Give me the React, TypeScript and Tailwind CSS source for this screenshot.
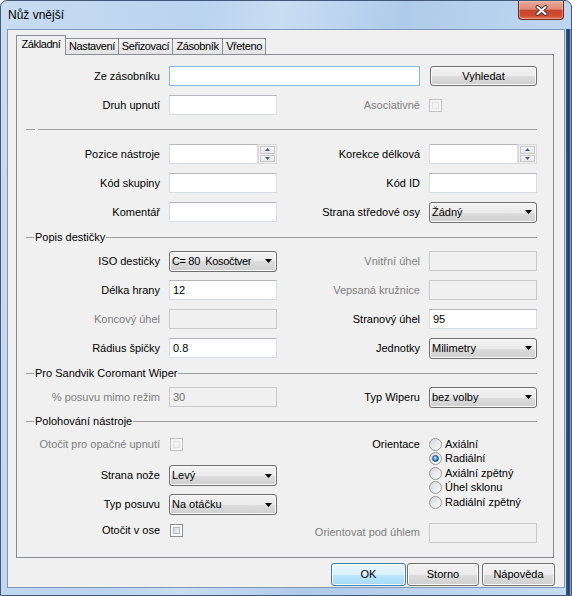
import clsx from 'clsx'

const GRAY = 'text-[#7f7f7f]'
const BTN_BG = 'bg-[linear-gradient(#f2f2f2_0%,#ebebeb_50%,#dddddd_50%,#cfcfcf_100%)]'

function Label({ children, right, disabled }: { children?: React.ReactNode; right?: boolean; disabled?: boolean }) {
    return (
        <span className={clsx('shrink-0 pr-[9px] text-right whitespace-nowrap', right ? 'w-[152px]' : 'w-[143px]', disabled && GRAY)}>
            {children}
        </span>
    )
}

function TextBox({ value, disabled, focused, wide }: { value?: string; disabled?: boolean; focused?: boolean; wide?: boolean }) {
    return (
        <div
            className={clsx(
                'h-[20px] shrink-0 border flex items-center pl-[3px]',
                wide ? 'w-[251px]' : 'w-[108px]',
                disabled
                    ? 'bg-[#f0f0f0] border-[#cacaca] text-[#6d6d6d]'
                    : focused
                        ? 'bg-white border-[#84b5e3]'
                        : 'bg-white border-[#d8dde4] border-t-[#b4b7be]',
            )}
        >
            {value}
        </div>
    )
}

function Spin() {
    return (
        <div className="flex h-[20px] w-[108px] shrink-0">
            <div className="w-[89px] h-full bg-white border border-[#d8dde4] border-t-[#b4b7be]" />
            <div className="w-[19px] h-full flex flex-col border border-[#dadada] bg-[#f0f0f0] p-px gap-px">
                <div className="flex-1 flex items-center justify-center border border-[#c9c9c9] bg-[linear-gradient(#f7f7f7,#e6e6e6)]">
                    <svg width="5" height="3" viewBox="0 0 5 3"><path d="M0 3H5L2.5 0Z" fill="#4a5f80" /></svg>
                </div>
                <div className="flex-1 flex items-center justify-center border border-[#c9c9c9] bg-[linear-gradient(#f7f7f7,#e6e6e6)]">
                    <svg width="5" height="3" viewBox="0 0 5 3"><path d="M0 0H5L2.5 3Z" fill="#4a5f80" /></svg>
                </div>
            </div>
        </div>
    )
}

function Combo({ value, tight }: { value: string; tight?: boolean }) {
    return (
        <div className={`w-[108px] h-[21px] shrink-0 flex items-center rounded-[3px] border border-[#707070] ${BTN_BG} shadow-[inset_0_0_0_1px_#f9f9f9] pl-[2px] pr-[4px]`}>
            <span className={clsx('flex-1 overflow-hidden whitespace-pre', tight && 'tracking-[-0.35px]')}>{value}</span>
            <svg width="7" height="4" viewBox="0 0 7 4" className="shrink-0 ml-[4px]"><path d="M0 0H7L3.5 4Z" fill="#000" /></svg>
        </div>
    )
}

function Check({ disabled }: { disabled?: boolean }) {
    return (
        <div className={clsx('w-[13px] h-[13px] shrink-0 border p-[2px]', disabled ? 'border-[#c2c2c2] bg-[#f4f4f4]' : 'border-[#8e8f8f] bg-white')}>
            <div className={clsx('w-full h-full border', disabled ? 'border-[#e2e2e2] bg-[#f2f2f2]' : 'border-[#b3b8be] bg-[linear-gradient(135deg,#d3d7dc,#f6f6f6)]')} />
        </div>
    )
}

function Radio({ label, checked }: { label: string; checked?: boolean }) {
    return (
        <div className="flex items-center h-[14.5px]">
            <div className="w-[13px] h-[13px] shrink-0 rounded-full border border-[#979797] bg-[linear-gradient(135deg,#d5d8dc,#fbfbfb)] flex items-center justify-center">
                {checked && (
                    <div className="w-[7px] h-[7px] rounded-full border border-[#1d4d80] bg-[radial-gradient(circle_at_40%_35%,#b9e4fa_0%,#3b8fd6_55%,#1b5898_100%)]" />
                )}
            </div>
            <span className="ml-[3px] whitespace-nowrap">{label}</span>
        </div>
    )
}

function Btn({ children, def, className }: { children: React.ReactNode; def?: boolean; className: string }) {
    return (
        <div
            className={clsx(
                'shrink-0 flex items-center justify-center rounded-[3px] border shadow-[inset_0_0_0_1px_#fbfbfb]',
                def ? 'border-[#3c7fb1] bg-[linear-gradient(#eaf6fd_0%,#d9f0fc_50%,#bee6fd_50%,#a7d9f5_100%)]' : `border-[#707070] ${BTN_BG}`,
                className,
            )}
        >
            {children}
        </div>
    )
}

function Group({ title, className }: { title?: string; className: string }) {
    return (
        <div className={clsx('flex items-center h-[13px] w-[511px]', className)}>
            <div className={clsx('h-px bg-[#a0a0a0]', title ? 'w-[8px]' : 'w-[9px]')} />
            {title ? <span className="px-px whitespace-nowrap">{title}</span> : <span className="w-[3px]" />}
            <div className="flex-1 h-px bg-[#a0a0a0]" />
        </div>
    )
}

function Tab({ label, active, className }: { label: string; active?: boolean; className: string }) {
    return (
        <div
            className={clsx(
                'flex items-center justify-center border border-[#898c95] whitespace-nowrap tracking-[-0.4px]',
                active ? 'h-[20px] relative z-10 border-b-0 bg-[#f0f0f0] pb-[3px]' : 'h-[17px] -ml-px bg-[linear-gradient(#f4f4f4,#e3e3e3)]',
                className,
            )}
        >
            {label}
        </div>
    )
}

function CloseBtn() {
    return (
        <div className="absolute top-0 right-[7px] w-[46px] h-[19px] rounded-b-[4px] border border-t-0 border-[#6b2a1e] bg-[linear-gradient(#e9ab9b_0%,#df8b76_45%,#c8452d_52%,#cf4b30_82%,#e0795d_100%)] shadow-[inset_0_0_0_1px_rgba(255,210,200,0.45)] flex items-center justify-center">
            <svg width="13" height="11" viewBox="0 0 13 11">
                <path d="M2.5 2L10.5 9M10.5 2L2.5 9" stroke="#4a3a36" strokeWidth="4" strokeLinecap="round" />
                <path d="M2.5 2L10.5 9M10.5 2L2.5 9" stroke="#fff" strokeWidth="2" strokeLinecap="round" />
            </svg>
        </div>
    )
}

export default function App() {
    return (
        <div className="w-[572px] h-[596px] relative flex flex-col overflow-hidden rounded-t-[7px] border border-[#42597a] bg-[linear-gradient(100deg,#c8dcf2_0%,#bad3ef_30%,#c9ddf3_42%,#afcbeb_60%,#bcd4ef_80%,#c6dbf2_100%)] font-['Liberation_Sans',Arial,sans-serif] text-[11px] leading-[13px] text-black">
            <div className="h-[28px] shrink-0 flex items-center pl-[7px] text-[12px]">Nůž vnější</div>
            <CloseBtn />

            {/* frame around the client area, with the dark glass streak on the right */}
            <div className="flex-1 flex px-[6px] pb-[7px] bg-[linear-gradient(90deg,transparent_565px,#3a5a86_565px,#1f3a63_568px,#4a6a94_569px,transparent_570px)]">
                <div className="w-full h-[559px] border border-[#7f97b6] bg-[#f0f0f0] flex flex-col pl-[8px] pr-[10px] pt-[5px]">
                    {/* tabs */}
                    <div className="flex items-end h-[20px]">
                        <Tab label="Základní" active className="w-[50px]" />
                        <Tab label="Nastavení" className="w-[54px]" />
                        <Tab label="Seřizovací" className="w-[55px]" />
                        <Tab label="Zásobník" className="w-[51px]" />
                        <Tab label="Vřeteno" className="w-[44px]" />
                    </div>

                    <div className="-mt-px h-[504px] border border-[#898c95] bg-[#f0f0f0] pl-[9px] pt-[11px] flex flex-col">
                        <div className="flex items-center h-[20px]">
                            <Label>Ze zásobníku</Label>
                            <TextBox wide focused />
                            <Btn className="ml-[10px] w-[107px] h-[20px]">Vyhledat</Btn>
                        </div>
                        <div className="flex items-center h-[20px] mt-[9px]">
                            <Label>Druh upnutí</Label>
                            <TextBox />
                            <Label right disabled>Asociativně</Label>
                            <Check disabled />
                        </div>

                        <Group className="mt-[8px]" />

                        <div className="flex items-center h-[20px] mt-[8px]">
                            <Label>Pozice nástroje</Label>
                            <Spin />
                            <Label right>Korekce délková</Label>
                            <Spin />
                        </div>
                        <div className="flex items-center h-[20px] mt-[9px]">
                            <Label>Kód skupiny</Label>
                            <TextBox />
                            <Label right>Kód ID</Label>
                            <TextBox />
                        </div>
                        <div className="flex items-center h-[20px] mt-[9px]">
                            <Label>Komentář</Label>
                            <TextBox />
                            <Label right>Strana středové osy</Label>
                            <Combo value="Žádný" />
                        </div>

                        <Group title="Popis destičky" className="mt-[9px]" />

                        <div className="flex items-center h-[20px] mt-[7px]">
                            <Label>ISO destičky</Label>
                            <Combo value="C= 80  Kosočtver" tight />
                            <Label right disabled>Vnitřní úhel</Label>
                            <TextBox disabled />
                        </div>
                        <div className="flex items-center h-[20px] mt-[9px]">
                            <Label>Délka hrany</Label>
                            <TextBox value="12" />
                            <Label right disabled>Vepsaná kružnice</Label>
                            <TextBox disabled />
                        </div>
                        <div className="flex items-center h-[20px] mt-[9px]">
                            <Label disabled>Koncový úhel</Label>
                            <TextBox disabled />
                            <Label right>Stranový úhel</Label>
                            <TextBox value="95" />
                        </div>
                        <div className="flex items-center h-[20px] mt-[9px]">
                            <Label>Rádius špičky</Label>
                            <TextBox value="0.8" />
                            <Label right>Jednotky</Label>
                            <Combo value="Milimetry" />
                        </div>

                        <Group title="Pro Sandvik Coromant Wiper" className="mt-[9px]" />

                        <div className="flex items-center h-[20px] mt-[7px]">
                            <Label disabled>% posuvu mimo režim</Label>
                            <TextBox disabled value="30" />
                            <Label right>Typ Wiperu</Label>
                            <Combo value="bez volby" />
                        </div>

                        <Group title="Polohování nástroje" className="mt-[8px]" />

                        <div className="flex mt-[9px]">
                            <div className="w-[251px] flex flex-col">
                                <div className="flex items-center h-[14px]">
                                    <Label disabled>Otočit pro opačné upnutí</Label>
                                    <span className="ml-px"><Check disabled /></span>
                                </div>
                                <div className="flex items-center h-[21px] mt-[14px]">
                                    <Label>Strana nože</Label>
                                    <Combo value="Levý" />
                                </div>
                                <div className="flex items-center h-[21px] mt-[8px]">
                                    <Label>Typ posuvu</Label>
                                    <Combo value="Na otáčku" />
                                </div>
                                <div className="flex items-center h-[16px] mt-[7px]">
                                    <Label>Otočit v ose</Label>
                                    <span className="ml-px"><Check /></span>
                                </div>
                            </div>
                            <div className="flex flex-col">
                                <div className="flex">
                                    <span className="w-[152px] shrink-0 pr-[9px] text-right h-[14.5px] flex items-center justify-end">Orientace</span>
                                    <div className="flex flex-col">
                                        <Radio label="Axiální" />
                                        <Radio label="Radiální" checked />
                                        <Radio label="Axiální zpětný" />
                                        <Radio label="Úhel sklonu" />
                                        <Radio label="Radiální zpětný" />
                                    </div>
                                </div>
                                <div className="flex items-center h-[20px] mt-[13px]">
                                    <Label right disabled>Orientovat pod úhlem</Label>
                                    <TextBox disabled />
                                </div>
                            </div>
                        </div>
                    </div>

                    <div className="flex justify-end mt-[5px] -mr-px">
                        <Btn def className="w-[75px] h-[23px]">OK</Btn>
                        <Btn className="ml-px w-[72px] h-[23px]">Storno</Btn>
                        <Btn className="ml-[3px] w-[73px] h-[23px]">Nápověda</Btn>
                    </div>
                </div>
            </div>
        </div>
    )
}
